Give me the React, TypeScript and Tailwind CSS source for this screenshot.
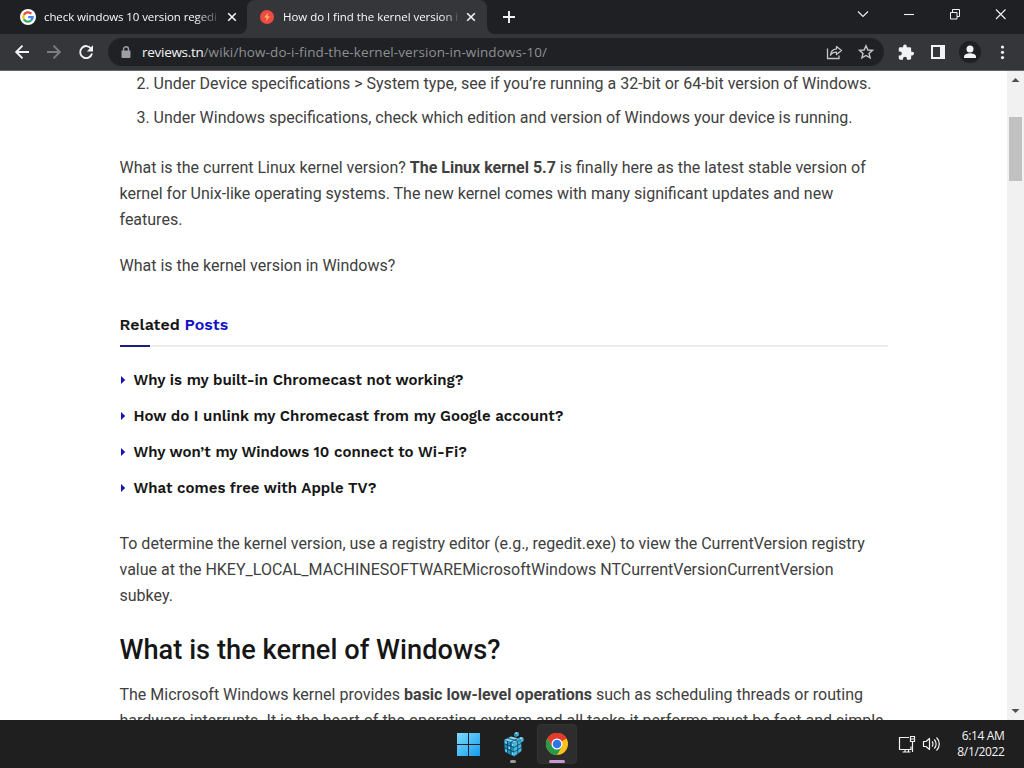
import React from "react";

const related = [
  "Why is my built-in Chromecast not working?",
  "How do I unlink my Chromecast from my Google account?",
  "Why won’t my Windows 10 connect to Wi-Fi?",
  "What comes free with Apple TV?",
];

function GoogleIcon() {
  return (
    <svg width="16" height="16" viewBox="0 0 16 16" className="shrink-0">
      <circle cx="8" cy="8" r="8" fill="#fff" />
      <g fill="none" strokeWidth="2.3">
        <path d="M11.3 4.7A4.7 4.7 0 0 0 3.9 5.7" stroke="#ea4335" />
        <path d="M3.9 5.7a4.7 4.7 0 0 0 0 4.6" stroke="#fbbc05" />
        <path d="M3.9 10.3a4.7 4.7 0 0 0 7.2 1.2" stroke="#34a853" />
        <path d="M11.1 11.5A4.7 4.7 0 0 0 12.6 8.2H8.2" stroke="#4285f4" />
      </g>
    </svg>
  );
}

function BoltIcon() {
  return (
    <svg width="14" height="14" viewBox="0 0 14 14" className="shrink-0">
      <circle cx="7" cy="7" r="7" fill="#ee4b45" />
      <path d="M8 2.4 4.2 7.6h2.4l-.7 4L9.9 6.3H7.4z" fill="#ffb45c" />
    </svg>
  );
}

function Cross() {
  return (
    <svg width="10" height="10" viewBox="0 0 10 10" className="shrink-0">
      <path d="m1.200 1.200 7.600 7.600m0-7.600L1.200 8.800" stroke="#f1f3f4" strokeWidth="1.600" />
    </svg>
  );
}

function TabStrip() {
  return (
    <div className="flex h-[34px] shrink-0 bg-[#1f2023] text-[11.5px] text-[#f8f9fa]">
      <div className="flex w-[247px] items-center pl-5">
        <GoogleIcon />
        <div className="ml-2 w-[174px] whitespace-nowrap tracking-[-0.1px] [mask-image:linear-gradient(to_right,black_152px,transparent_178px)]">
          check windows 10 version regedi
        </div>
        <div className="ml-[9px] flex"><Cross /></div>
      </div>
      <svg width="8" height="34" viewBox="0 0 8 34" className="-ml-2 shrink-0">
        <path d="M8 26v8H0a8 8 0 0 0 8-8z" fill="#35363a" />
      </svg>
      <div className="flex w-[240px] items-center rounded-t-lg bg-[#35363a] pl-[13px]">
        <BoltIcon />
        <div className="ml-[9px] w-[174px] whitespace-nowrap tracking-[-0.04px] [mask-image:linear-gradient(to_right,black_158px,transparent_182px)]">
          How do I find the kernel version i
        </div>
        <div className="ml-[9px] flex"><Cross /></div>
      </div>
      <svg width="8" height="34" viewBox="0 0 8 34" className="shrink-0">
        <path d="M0 26v8h8a8 8 0 0 1-8-8z" fill="#35363a" />
      </svg>
      <svg width="529" height="34" viewBox="495 0 529 34" fill="none" stroke="#f1f3f4">
        <path d="M503 17h12m-6-6v12" strokeWidth="1.9" />
        <path d="m858 11.500 5 5 5-5" strokeWidth="1.1" />
        <path d="M904 14.500h10" strokeWidth="1.1" />
        <path d="M950.500 12.500h6.500v6.500h-6.500zM952.500 12v-2.500h7v7H957" strokeWidth="1" />
        <path d="m996 9.500 9.500 9.500m0-9.500L996 19" strokeWidth="1.1" />
      </svg>
    </div>
  );
}

function Toolbar() {
  return (
    <div className="flex h-9 shrink-0 items-center bg-[#35363a]">
      <svg width="108" height="36" viewBox="0 34 108 36" className="shrink-0" fill="none" strokeWidth="1.9">
        <path d="M29 52H16.500m6-6.300L16.200 52l6.300 6.300" stroke="#f1f3f4" />
        <path d="M47 52h12.500m-6-6.300 6.300 6.300-6.300 6.300" stroke="#7d7e82" />
        <path d="M91.200 48.800A6 6 0 1 0 92 53.500" stroke="#f1f3f4" />
        <path d="M93 45.300v6.200h-6.200z" fill="#f1f3f4" />
      </svg>
      <div className="flex h-7 w-[776px] shrink-0 items-center rounded-full bg-[#202124] pl-[13px]">
        <svg width="10" height="13" viewBox="0 0 10 13" className="shrink-0">
          <path d="M2.500 5V3.300a2.500 2.500 0 0 1 5 0V5" fill="none" stroke="#9aa0a6" strokeWidth="1.400" />
          <rect x=".5" y="4.500" width="9" height="7.500" rx="1" fill="#9aa0a6" />
        </svg>
        <div className="ml-[11px] flex-1 whitespace-nowrap text-[13.5px] leading-[18px] text-[#8d9095]">
          <span className="tracking-[-0.28px] text-[#f1f3f4]">reviews.tn</span>
          <span className="tracking-[0.1px]">/wiki/how-do-i-find-the-kernel-version-in-windows-10/</span>
        </div>
        <svg width="64" height="28" viewBox="820 38 64 28" className="shrink-0" fill="none" stroke="#c4c7ca" strokeWidth="1.300">
          <path d="M827.500 48.500v10h11.500v-3" />
          <path d="M836.500 46.500l5 4-5 4v-2.300c-3 0-4.700.8-6 3 .3-3.800 2.500-6 6-6.300z" strokeLinejoin="round" />
          <path d="m866 45.800 1.900 4.200 4.600.4-3.500 3 1.100 4.500-4.100-2.400-4.100 2.400 1.100-4.500-3.500-3 4.600-.4z" strokeWidth="1.400" />
        </svg>
      </div>
      <svg width="140" height="36" viewBox="884 34 140 36" className="shrink-0">
        <g transform="translate(897.300 43.700) scale(.73)" fill="#f1f3f4">
          <path d="M20.500 11H19V7a2 2 0 0 0-2-2h-4V3.500a2.500 2.500 0 0 0-5 0V5H4a2 2 0 0 0-2 2v3.800h1.500a2.700 2.700 0 0 1 0 5.400H2V20a2 2 0 0 0 2 2h3.800v-1.500a2.700 2.700 0 0 1 5.400 0V22H17a2 2 0 0 0 2-2v-4h1.500a2.500 2.500 0 0 0 0-5z" />
        </g>
        <path fillRule="evenodd" d="M931 45h14v14h-14zM933 47v10h7V47z" fill="#f1f3f4" />
        <circle cx="970" cy="52" r="11" fill="#1f2023" />
        <circle cx="970" cy="49" r="3.500" fill="#f1f3f4" />
        <path d="M964 58v-1.500c0-2.300 4-3.300 6-3.300s6 1 6 3.300V58z" fill="#f1f3f4" />
        <g fill="#f1f3f4"><circle cx="1002.500" cy="47" r="1.600" /><circle cx="1002.500" cy="52.300" r="1.600" /><circle cx="1002.500" cy="57.600" r="1.600" /></g>
      </svg>
    </div>
  );
}

function Article() {
  return (
    <main className="min-w-0 flex-1 overflow-hidden whitespace-nowrap bg-white pl-[119.5px] font-['Roboto',sans-serif] text-[16px] leading-[26px] text-[#404040]">
      <ol className="flex flex-col gap-2">
        <li className="flex pl-[17px]"><span className="w-[17px]">2.</span>Under Device specifications &gt; System type, see if you’re running a 32-bit or 64-bit version of Windows.</li>
        <li className="flex pl-[17px]"><span className="w-[17px]">3.</span>Under Windows specifications, check which edition and version of Windows your device is running.</li>
      </ol>
      <p className="mt-6">
        What is the current Linux kernel version? <b className="font-bold">The Linux kernel 5.7</b> is finally here as the latest stable version of<br />
        kernel for Unix-like operating systems. The new kernel comes with many significant updates and new<br />
        features.
      </p>
      <p className="mt-5">What is the kernel version in Windows?</p>
      <section className="mt-8 w-[768px] font-['Work_Sans','Inter',sans-serif] font-semibold text-[#161616]">
        <div className="flex h-9 border-b-2 border-[#ededed]">
          <h3 className="-mb-0.5 flex h-9 w-[30px] border-b-2 border-[#1c1c8c] text-[16px] leading-[28px]">
            <span>Related <span className="text-[#1111c4]">Posts</span></span>
          </h3>
        </div>
        <ul className="mt-[15px] text-[15px] leading-[36px]">
          {related.map((text) => (
            <li key={text} className="flex h-9 items-center">
              <svg width="14" height="8" viewBox="0 0 14 8"><path d="M1 0v8l4.200-4z" fill="#1414b8" /></svg>
              <span className="tracking-[0.02px]">{text}</span>
            </li>
          ))}
        </ul>
      </section>
      <p className="mt-[25px]">
        To determine the kernel version, use a registry editor (e.g., regedit.exe) to view the CurrentVersion registry<br />
        value at the HKEY_LOCAL_MACHINESOFTWAREMicrosoftWindows NTCurrentVersionCurrentVersion<br />
        subkey.
      </p>
      <h2 className="mt-[25px] text-[27.2px] leading-[32px] font-medium tracking-[0.03px] text-[#161616]">What is the kernel of Windows?</h2>
      <p className="mt-4">
        The Microsoft Windows kernel provides <b className="font-bold">basic low-level operations</b> such as scheduling threads or routing<br />
        hardware interrupts. It is the heart of the operating system and all tasks it performs must be fast and simple.
      </p>
    </main>
  );
}

function Scrollbar() {
  return (
    <div className="flex w-[17px] shrink-0 flex-col items-center bg-[#f1f1f1]">
      <svg width="17" height="17" viewBox="0 0 17 17"><path d="M4.500 11h8l-4-4z" fill="#505050" /></svg>
      <div className="mt-[29px] h-16 w-[13px] bg-[#c1c1c1]" />
      <svg width="17" height="17" viewBox="0 0 17 17" className="mt-auto"><path d="M4.500 6h8l-4 4z" fill="#505050" /></svg>
    </div>
  );
}

function RegistryCubes() {
  return (
    <g>
      <path d="m504 740 7-3.500 10 2.500-7 4z" fill="#7fd6f2" />
      <path d="m504 740 10 3v13.500l-9-4.500z" fill="#2391c0" />
      <path d="m514 743 7-4 .500 12-7.500 5.500z" fill="#46b9e0" />
      <path d="m504.500 744 9.500 3.500 7.300-4.200M504.700 748l9.300 4 7.400-4.700M507.500 741v12.300M510.800 742v13M517.700 741v12.500M507.500 738.300l10 2.600M511 742l7-3.500" fill="none" stroke="#0d3f5a" strokeWidth=".8" />
      <path d="m505.300 741.200 1.500.5v2l-1.500-.6zM508.700 746.400l1.400.5v2.300l-1.400-.6zM505.400 749.300l1.400.6v2l-1.400-.7zM512 743.500l1.400.4v2.400l-1.400-.5zM512 752.300l1.400.6v2.300l-1.400-.7z" fill="#8be3fa" />
      <path d="m514 733.300 2.500-1.300 2.300.8-2.500 1.400z" fill="#9be6fa" />
      <path d="m514 733.300 2.300.9v2.700l-2.300-1z" fill="#2391c0" />
      <path d="m516.300 734.200 2.500-1.400v2.700l-2.500 1.400z" fill="#46b9e0" />
      <path d="m518.500 738.300 2.500-1.300 2.600.9-2.600 1.500z" fill="#9be6fa" />
      <path d="m518.500 738.300 2.500 1.100v3l-2.500-1z" fill="#2391c0" />
      <path d="m521 739.400 2.600-1.500v3l-2.600 1.500z" fill="#46b9e0" />
    </g>
  );
}

function Taskbar() {
  return (
    <footer className="flex h-12 shrink-0 bg-[#1f1f1f]">
      <svg width="537" height="48" viewBox="0 720 537 48" className="shrink-0">
        <defs>
          <linearGradient id="win" x1="457" y1="733" x2="480" y2="756" gradientUnits="userSpaceOnUse">
            <stop stopColor="#7ddcfb" /><stop offset="1" stopColor="#149cf0" />
          </linearGradient>
        </defs>
        <path d="M457 733h11v11h-11zM469 733h11v11h-11zM457 745h11v11h-11zM469 745h11v11h-11z" fill="url(#win)" />
        <RegistryCubes />
        <rect x="510" y="760" width="6" height="3" rx="1.500" fill="#9b9b9b" />
      </svg>
      <div className="mt-1 flex h-10 w-10 shrink-0 rounded border border-[#333] bg-[#2d2d2d]">
        <svg width="38" height="38" viewBox="538 725 38 38">
          <circle cx="557" cy="744" r="11" fill="#fbc116" />
          <path d="M557 744 547.470 738.500A11 11 0 0 1 566.530 738.500z" fill="#e33b2e" />
          <path d="M557 738.500h9.530a11 11 0 0 0-19.060 0l4.770 8.250z" fill="#e33b2e" />
          <path d="m552.240 746.750-4.770-8.250A11 11 0 0 0 557 755l4.760-8.250z" fill="#269a48" />
          <circle cx="557" cy="744" r="5.500" fill="#fff" />
          <circle cx="557" cy="744" r="4.300" fill="#2f76e4" />
          <rect x="549" y="760" width="16" height="3" rx="1.500" fill="#c99ad0" />
        </svg>
      </div>
      <svg width="373" height="48" viewBox="577 720 373 48" className="shrink-0" fill="none" stroke="#f0f0f0" strokeWidth="1.200">
        <path d="M909 737.500h-9.500v12h11.500v-3M902.500 752h8M905 749.500v2.500M908.500 749.500v2.500" />
        <path d="M910.500 736.500h4v5h-4zM912.500 741.500v10.500M910.500 739h4" />
        <path d="M923.500 741.500h2.500l3.500-3v11l-3.500-3h-2.500z" strokeLinejoin="round" />
        <path d="M932 741.500a3.500 3.500 0 0 1 0 5M934.300 739.500a6.500 6.500 0 0 1 0 9M936.500 737.500a9 9 0 0 1 0 13" />
      </svg>
      <div className="flex flex-1 flex-col items-end pt-2 pr-[19.5px] text-[12px] leading-4 whitespace-nowrap text-[#f4f4f4]">
        <span className="tracking-[-0.35px]">6:14 AM</span>
        <span className="tracking-[-0.35px]">8/1/2022</span>
      </div>
    </footer>
  );
}

export default function App() {
  return (
    <div className="flex h-[768px] w-[1024px] flex-col overflow-hidden font-['Open_Sans','Noto_Sans',sans-serif]">
      <TabStrip />
      <Toolbar />
      <div className="flex min-h-0 flex-1 border-t border-[#6a646c]">
        <Article />
        <Scrollbar />
      </div>
      <Taskbar />
    </div>
  );
}
